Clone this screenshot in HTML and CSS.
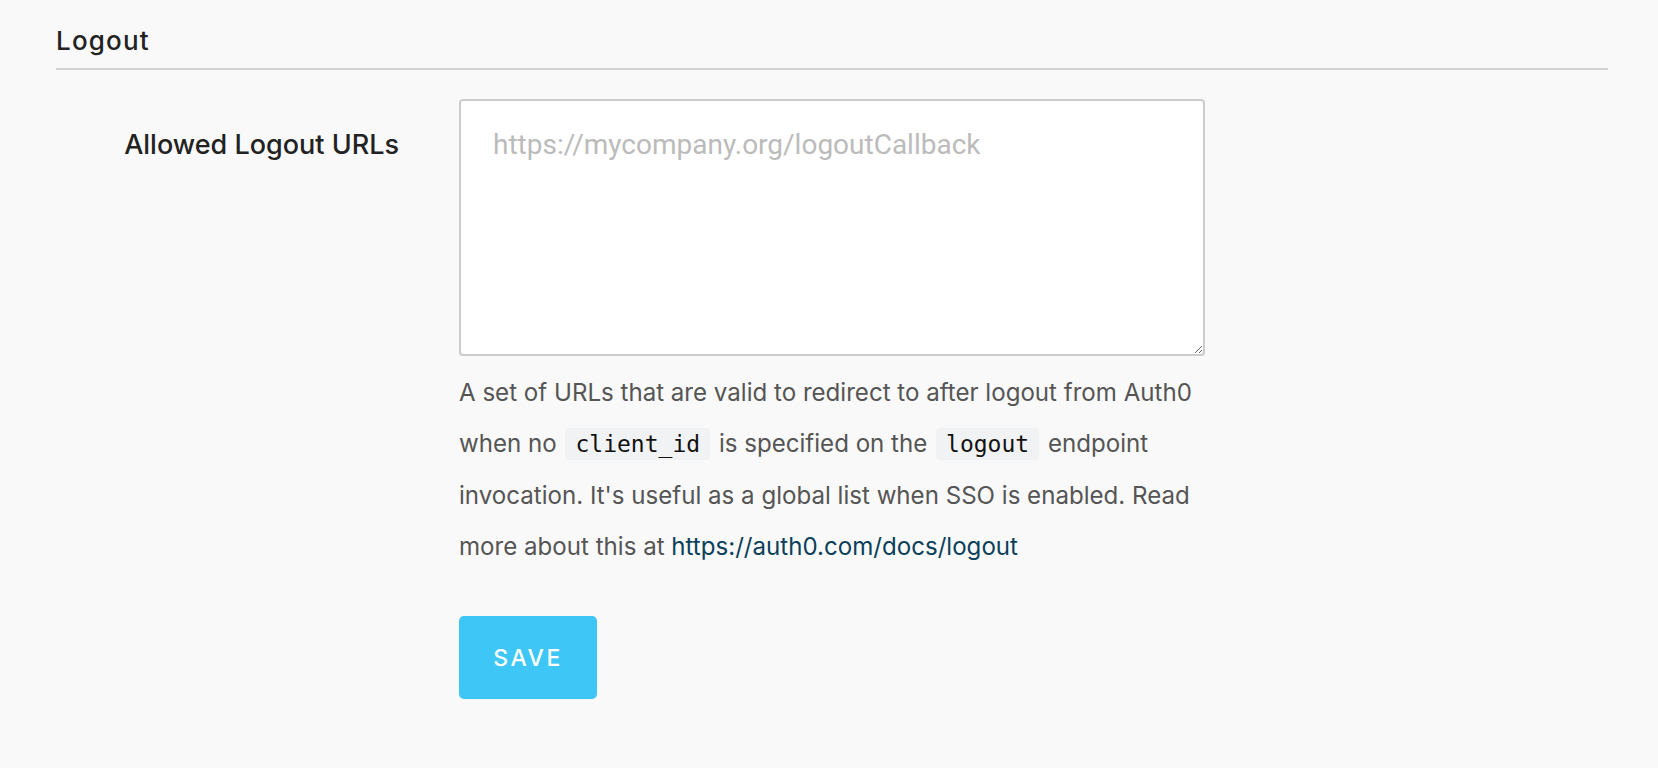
FILE: index.html
```html
<!DOCTYPE html>
<html lang="en">
<head>
<meta charset="utf-8">
<title>Logout settings</title>
<link rel="stylesheet" href="styles.css">
</head>
<body>
<div class="page">
  <section class="section">
    <h2 class="section-title">Logout</h2>
    <div class="form-row">
      <label class="field-label" for="logout-urls">Allowed Logout URLs</label>
      <div class="field">
        <textarea id="logout-urls" class="textarea" placeholder="https://mycompany.org/logoutCallback"></textarea>
        <p class="help">A set of URLs that are valid to redirect to after logout from Auth0 when no <code class="code">client_id</code> is specified on the <code class="code">logout</code> endpoint invocation. It's useful as a global list when SSO is enabled. Read more about this at <a class="link" href="#">https://auth0.com/docs/logout</a></p>
      </div>
    </div>
    <div class="form-row actions">
      <div class="field-label-spacer"></div>
      <div class="field">
        <button class="btn" type="button">SAVE</button>
      </div>
    </div>
  </section>
</div>
</body>
</html>
```
FILE: styles.css
```css
html, body {
  margin: 0;
  padding: 0;
  background: #f9f9f9;
}
body {
  font-family: Inter, "Noto Sans", sans-serif;
  color: #222;
}
.page {
  padding: 25px 50px 40px 56px;
}
.section-title {
  margin: 0;
  font-size: 26px;
  line-height: 31px;
  font-weight: 500;
  color: #222;
  letter-spacing: 1.2px;
  padding-bottom: 12px;
  border-bottom: 2px solid #d3d3d3;
}
.form-row {
  display: flex;
  margin-top: 29px;
}
.field-label,
.field-label-spacer {
  flex: 0 0 343px;
  padding-right: 60px;
  text-align: right;
}
.field-label {
  padding-top: 30px;
  font-size: 27px;
  line-height: 32px;
  font-weight: 500;
  color: #222;
}
.field {
  flex: 0 0 746px;
}
.textarea {
  display: block;
  box-sizing: border-box;
  width: 746px;
  height: 257px;
  margin: 0;
  padding: 26px 32px;
  border: 2px solid #cccccc;
  border-radius: 4px;
  background: #fff;
  font-family: Roboto, "Liberation Sans", sans-serif;
  font-size: 28px;
  line-height: 1.3;
  color: #333;
  resize: vertical;
}
.textarea::placeholder {
  color: #bbbbbb;
}
.help {
  margin: 11px 0 0;
  font-size: 24.1px;
  line-height: 51px;
  color: #555;
}
.code {
  font-family: "DejaVu Sans Mono", "Liberation Mono", monospace;
  font-size: 23px;
  color: #111;
  background: #f1f2f3;
  padding: 3px 10px;
  margin: 0 2px;
  border-radius: 4px;
}
.link {
  color: #0b3f5a;
  text-decoration: none;
}
.actions {
  margin-top: 44px;
}
.btn {
  width: 138px;
  height: 83px;
  border: 0;
  border-radius: 5px;
  background: #3dc6f6;
  color: #fff;
  font-family: Inter, "Noto Sans", sans-serif;
  font-size: 23px;
  font-weight: 500;
  letter-spacing: 2.5px;
  padding: 0;
  cursor: pointer;
}
```
